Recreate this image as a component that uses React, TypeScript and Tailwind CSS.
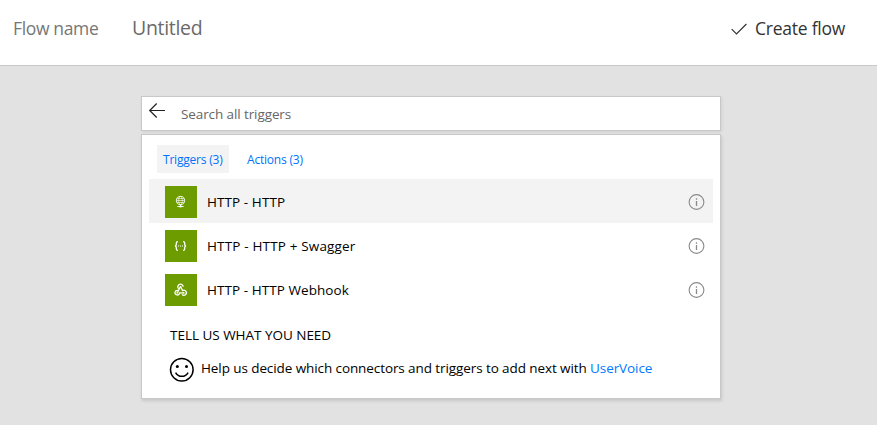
import React from "react";

const rows = [
  { label: "HTTP - HTTP", icon: "globe", spacing: "tracking-[0.08px]" },
  { label: "HTTP - HTTP + Swagger", icon: "braces", spacing: "tracking-[0.16px]" },
  { label: "HTTP - HTTP Webhook", icon: "webhook", spacing: "tracking-[0.06px]" },
];

function ConnectorIcon({ kind }: { kind: string }) {
  return (
    <span className="flex h-8 w-8 shrink-0 items-center justify-center bg-[#6c9c00]">
      <svg width="32" height="32" viewBox="0 0 32 32" fill="none" stroke="#fff" strokeWidth="0.9">
        {kind === "globe" && (
          <>
            <circle cx="15.5" cy="14.5" r="4.1" />
            <ellipse cx="15.5" cy="14.5" rx="1.9" ry="4.1" strokeWidth="0.6" />
            <path d="M11.4 14.5h8.2M12 12.5h7M12 16.5h7" strokeWidth="0.6" />
            <path d="M15.5 18.6v2M12.3 20.5h6.4" />
            <ellipse cx="15.5" cy="20.6" rx="1.5" ry="1" fill="#fff" stroke="none" />
          </>
        )}
        {kind === "braces" && (
          <>
            <path
              d="M12.9 11.6c-1.4 0-1.6.5-1.6 1.6v1.4c0 .9-.4 1.4-1.4 1.4 1 0 1.4.5 1.4 1.4v1.4c0 1.1.2 1.6 1.6 1.6M18.1 11.6c1.4 0 1.6.5 1.6 1.6v1.4c0 .9.4 1.4 1.4 1.4-1 0-1.4.5-1.4 1.4v1.4c0 1.1-.2 1.6-1.6 1.6"
              strokeWidth="1.3"
            />
            <path d="M13 16h1M15 16h1M17 16h1" strokeWidth="1" />
          </>
        )}
        {kind === "webhook" && (
          <>
            <path d="M13.6 14.8a2.7 2.7 0 1 1 4.6-2" strokeWidth="1.3" />
            <path d="M15.6 12.9l2 3.7a2.5 2.5 0 1 1-.6 3.8" strokeWidth="1.3" />
            <path d="M15 13.4l-2.4 4.8M12.6 16.4a2.3 2.3 0 1 0 2 2.4h4" strokeWidth="1.3" />
            <circle cx="15.5" cy="12.9" r="0.9" fill="#fff" stroke="none" />
            <circle cx="12.3" cy="18.8" r="0.9" fill="#fff" stroke="none" />
            <circle cx="18.7" cy="18.8" r="0.9" fill="#fff" stroke="none" />
          </>
        )}
      </svg>
    </span>
  );
}

function InfoIcon() {
  return (
    <svg width="18" height="18" viewBox="0 0 18 18" fill="none" stroke="#8a8a8a">
      <circle cx="9.5" cy="9" r="7.4" strokeWidth="1.1" />
      <path d="M9.5 8v5M9.5 5.2v1.5" strokeWidth="1.3" />
    </svg>
  );
}

export default function App() {
  return (
    <div className="flex h-[425px] w-[877px] flex-col overflow-hidden bg-[#e2e2e2] font-['Open_Sans','Noto_Sans',sans-serif] text-black">
      <header className="flex h-[66px] shrink-0 items-start border-b border-[#c8c8c8] bg-white pt-[14px] leading-7 whitespace-nowrap">
        <span className="w-[119px] pl-[13px] text-[17.5px] tracking-[-0.35px] text-[#767676]">Flow name</span>
        <span className="pl-[13px] text-[19.5px] tracking-[-0.3px] text-[#6a6a6a]">Untitled</span>
        <button className="ml-auto flex w-[146px] items-center text-left">
          <svg width="16" height="14" viewBox="0 0 16 14" fill="none" stroke="#333" strokeWidth="1.2" className="mt-0.5 mr-2">
            <path d="M.7 7.2l4.8 4.8L15.4 2" />
          </svg>
          <span className="text-[17.5px] tracking-[-0.24px] text-[#333]">Create flow</span>
        </button>
      </header>

      <main className="ml-[141px] flex w-[580px] flex-col gap-[3px] pt-[30px] whitespace-nowrap">
        <div className="flex h-[35px] items-center border border-[#c8c8c8] bg-white pl-[6px] shadow-[1px_1px_3px_rgba(0,0,0,0.08)]">
          <svg width="18" height="16" viewBox="0 0 18 16" fill="none" stroke="#222" strokeWidth="1.2" className="mb-[5px]">
            <path d="M17 7.5H1.5M8.7 .5l-7 7 7 7" />
          </svg>
          <span className="mt-0.5 ml-[15px] text-[13.5px] tracking-[-0.1px] text-[#666]">Search all triggers</span>
        </div>

        <section className="flex h-[265px] flex-col border border-[#c8c8c8] bg-white px-[7px] pt-[10px] shadow-[1px_2px_3px_rgba(0,0,0,0.12)]">
          <nav className="ml-2 flex h-7 text-[12px] text-[#0072ff]">
            <button className="w-[72px] bg-[#f3f3f3] pt-0.5 pl-[6px] text-left tracking-[-0.2px]">Triggers (3)</button>
            <button className="ml-3 pt-0.5 pl-[6px] text-left tracking-[-0.2px]">Actions (3)</button>
          </nav>
          <ul className="mt-[6px] w-[564px]">
            {rows.map((row, i) => (
              <li key={row.label} className={`flex h-11 items-center pt-0.5 pr-2 pl-4 ${i === 0 ? "bg-[#f3f3f3]" : ""}`}>
                <ConnectorIcon kind={row.icon} />
                <span className={`ml-[10px] flex-1 text-[13.5px] ${row.spacing}`}>{row.label}</span>
                <InfoIcon />
              </li>
            ))}
          </ul>
          <h2 className="mt-[14px] ml-[21px] h-5 text-[13.5px] leading-5 tracking-[-0.02px]">TELL US WHAT YOU NEED</h2>
          <div className="mt-3 ml-5 flex items-center text-[13.5px]">
            <svg width="26" height="26" viewBox="0 0 26 26" fill="none" stroke="#000" strokeWidth="1.5">
              <circle cx="12.8" cy="12.8" r="11.3" />
              <circle cx="8.3" cy="9.6" r="1.5" fill="#000" stroke="none" />
              <circle cx="17.5" cy="9.6" r="1.5" fill="#000" stroke="none" />
              <path d="M6.6 15.6c2.7 5 9.8 5 12.5 0" />
            </svg>
            <p className="mb-[3px] ml-[6px] tracking-[-0.09px]">
              Help us decide which connectors and triggers to add next with{" "}
              <a className="text-[#0078ff]">UserVoice</a>
            </p>
          </div>
        </section>
      </main>
    </div>
  );
}
